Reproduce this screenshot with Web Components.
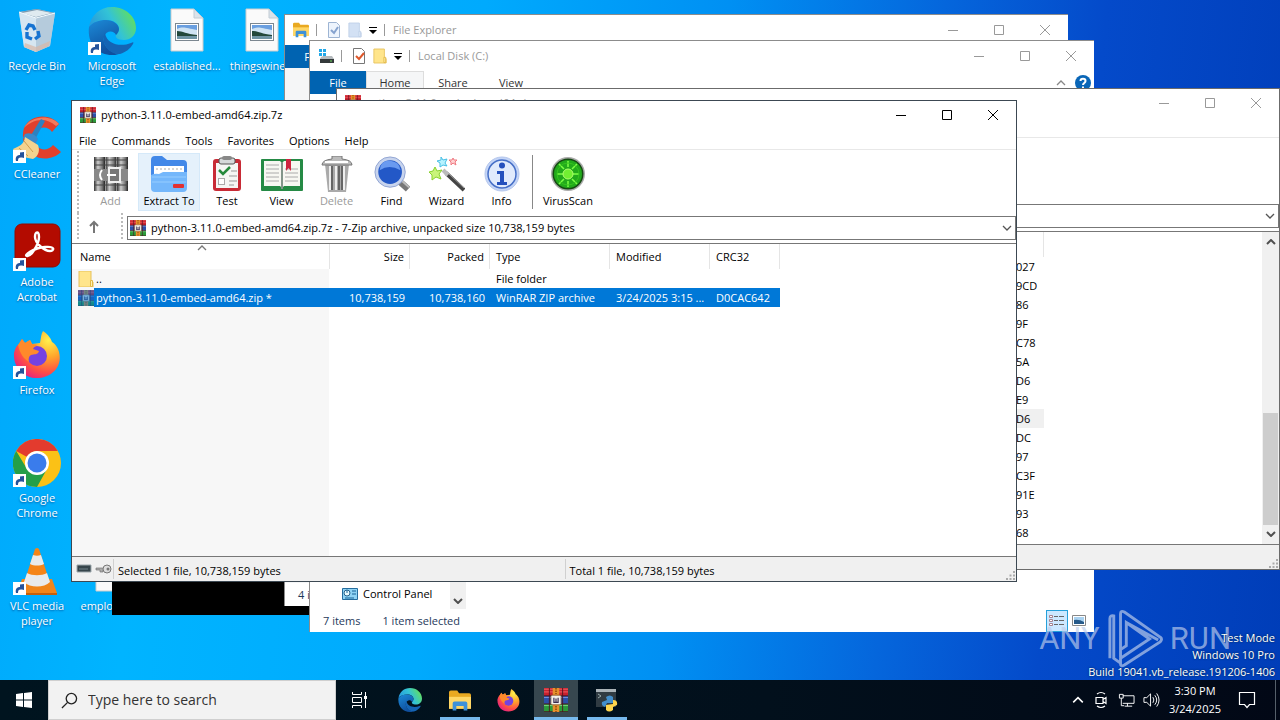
<!DOCTYPE html>
<html lang="en">
<head>
<meta charset="utf-8">
<title>Desktop</title>
<style>
  html, body { margin: 0; height: 100%; }
  body {
    --ui: "Open Sans", "Noto Sans", sans-serif;
    font: 11px/16px var(--ui);
    color: #000;
    overflow: hidden;
  }
</style>
</head>
<body>
<desktop-shell></desktop-shell>

<script>
const ICONS = {
  rar: ['0 0 16 16', `<rect width="16" height="5.3" fill="#c9202e"/><rect y="5.3" width="16" height="5.4" fill="#2c4fa8"/><rect y="10.7" width="16" height="5.3" fill="#2a9a3a"/>
    <path d="M0 .8h16M0 2.6h16" stroke="#f06a6a" stroke-width=".6"/><path d="M0 6.3h16" stroke="#7f9be6" stroke-width=".6"/><path d="M0 11.7h16" stroke="#7fd886" stroke-width=".6"/>
    <path d="M0 5.2h16M0 10.6h16M0 15.8h16M3.6 0v16M12.4 0v16" stroke="#4d1420" stroke-width=".6"/>
    <rect x="5.8" width="4.4" height="16" fill="#e8902c"/><path d="M8 0v4M8 12v4" stroke="#8a4508" stroke-dasharray="1 .7"/>
    <rect x="4.6" y="4.8" width="6.8" height="6.4" rx=".8" fill="#f3f0ea" stroke="#7c4b20" stroke-width=".5"/><path d="M6.600 9.600V6.500M8 9.600V7M9.400 9.600V6.500M6.200 9.600h3.600" fill="none" stroke="#3a2c50" stroke-width=".8"/>`],
  bin: ['0 0 48 48', `<path d="M6 5 24 2l18 4-5 33-14 6-12-5z" fill="#b9d6ea" opacity=".85"/><path d="M6 5 24 2l18 4-19 5z" fill="#7d9bb0"/><path d="M9 6l15-3 15 3-16 4z" fill="#dfeaf0"/><path d="M6 5 23 11v34l-12-5z" fill="#d6e6f1"/><path d="M23 11 42 6l-5 33-14 6z" fill="#b5cbdc"/><path d="M6 5 23 11 42 6" fill="none" stroke="#f5fbff"/><path d="M12 36l11 4 14-6-1 5-13 6-12-5z" fill="#d8b7a5" opacity=".7"/><path d="m13 23 3-5 4 1 2 4M25 24l1 5-4 3M19 32l-5-2v-5" fill="none" stroke="#1673d1" stroke-width="3.4"/>`],
  edge: ['0 0 48 48', `<defs><linearGradient id="a" x1="0" x2="1" y1=".6" y2=".2"><stop stop-color="#2597dc"/><stop offset=".5" stop-color="#33c3d6"/><stop offset="1" stop-color="#68e24f"/></linearGradient><linearGradient id="b" y2="1" x2=".4"><stop stop-color="#1c8bd8"/><stop offset="1" stop-color="#0f4f9e"/></linearGradient></defs>
    <path d="M1 20C3 8 12 0 24 0c14 0 24 10 24 21 0 8-6 12-12 12-7 0-9-3-8-5 2-2 3-4 3-6 0-5-5-9-12-9C11 13 4 16 1 20z" fill="url(#a)"/><path d="M1 20c4-5 10-7 17-7 7 0 13 4 13 9 0 2-1 4-3 6-2-5-10-5-12 2-2 8 6 16 15 17-3 1-5 1-7 1C9 48-1 36 1 20z" fill="url(#b)"/><path d="M17 26c-5 10 4 22 15 21 6-2 10-5 13-10 1-2 0-2-2-1-10 4-24 2-26-10z" fill="#1564b4"/>`],
  picture: ['0 0 48 48', `<path d="M8 2h23l9 9v33H8z" fill="#fafafa" stroke="#ccc"/><path d="M31 2v9h9z" fill="#dbe3ea" stroke="#c2ccd4"/><rect x="12.500" y="16.500" width="23" height="17" fill="#fff" stroke="#7c8790"/><rect x="14" y="18" width="20" height="14" fill="#6a9fe0"/><path d="M14 22c6-3 9-1 20 1v5H14z" fill="#cfe3f3"/><path d="M14 24c6 0 9 3 20 4v1H14z" fill="#23483b"/><path d="M14 29h20v3H14z" fill="#6f95a5"/>`],
  cc: ['0 0 48 48', `<path d="M46 9C38-1 18-2 11 13c-3 9 0 22 9 27 9 6 21 4 28-3l-8-7c-4 5-11 6-15 2-5-5-5-13-1-17 5-4 12-3 15 2z" fill="#e0402c"/><path d="M11 13C17 1 37-1 46 9l-3 2C32 1 19 5 11 13z" fill="#f37a5c"/><path d="m28 4 4 2-12 22-5-3z" fill="#2c81c0"/><path d="M12 19c5-2 10 0 13 5l-4 7-11-8z" fill="#3a8acb"/><path d="M12 22c-1 8-6 9-12 12 2 6 10 8 20 10 6-3 7-9 5-14z" fill="#f4d38f"/><path d="m6 33 9 8m-4-15 9 11" stroke="#d29d4e"/>`],
  adobe: ['0 0 48 48', `<rect x="2" y="1" width="45" height="43" rx="7" fill="#b30b00" stroke="#930900"/><path d="M14 33c-4 0 6-8 18-9 11-1 9 4 5 4-6 0-15-8-15-14 0-6 4-6 4 0 0 7-8 20-12 19z" fill="none" stroke="#fff" stroke-width="2.400"/>`],
  firefox: ['0 0 48 48', `<defs><radialGradient id="f" cx=".75" cy=".2" r=".9"><stop stop-color="#fff04d"/><stop offset=".4" stop-color="#ffa62b"/><stop offset=".75" stop-color="#ff4f45"/><stop offset="1" stop-color="#e5227f"/></radialGradient></defs><path d="M30 0c6 4 8 8 9 11 2 1 6 5 7 10 4 15-8 26-22 26S0 36 1 22c1-5 3-8 5-9l3-5 3 4 5-3 2 4 8-1c1-5 1-9 3-12z" fill="url(#f)"/><circle cx="24" cy="25" r="10" fill="#7542e0"/><path d="M5 14l4-6 3 4 5-3 2 4 8 1c-4 0-6 2-7 4l6 2c-1 4-5 3-8 4-2 1-3 4-2 7-5-3-9-8-11-17z" fill="#ff8a2b"/>`],
  chrome: ['0 0 48 48', `<circle cx="24" cy="24" r="24" fill="#fbc116"/><path d="M3.200 12A24 24 0 0 1 44.800 12H24a12 12 0 0 0-10 6z" fill="#e33b2e"/><path d="M3.200 12A24 24 0 0 0 24 48l10-18a12 12 0 0 1-20 0z" fill="#249f49"/><circle cx="24" cy="24" r="12" fill="#fff"/><circle cx="24" cy="24" r="9.500" fill="#3a7cec"/>`],
  vlc: ['0 0 48 48', `<path d="M9 32h30l5 14H4z" fill="#f0851a"/><path d="M4 46h40v2H4z" fill="#c65f0a"/><path d="M22 2q2-2 4 0l11 34c-6 5-20 5-26 0z" fill="#f58518"/><path d="m20 8-3 9c4 2 10 2 14 0l-3-9c-3 1-5 1-8 0zm-6 18-3 9c6 6 20 6 26 0l-3-9c-5 3-15 3-20 0z" fill="#e9ebec"/>`],
  shortcut: ['0 0 13 13', `<rect width="13" height="13" fill="#fff"/><path d="M3 11C2 7 4 5 7 5V2.500L11 2v6L9 7.500C6 7 5 8 5 11z" fill="#25539b"/>`],
  add: ['0 0 36 36', `<defs><linearGradient id="g"><stop stop-color="#333"/><stop offset=".35" stop-color="#ccc"/><stop offset=".75" stop-color="#777"/><stop offset="1" stop-color="#222"/></linearGradient></defs><rect x="1" y="1" width="11" height="34" fill="url(#g)"/><rect x="12.500" y="1" width="11" height="34" fill="url(#g)"/><rect x="24" y="1" width="11" height="34" fill="url(#g)"/><path d="M1 4h34M1 9h34M1 29h34" stroke="#444"/><rect x="1" y="13" width="34" height="12" fill="#888"/><rect x="16" y="12" width="11" height="14" fill="#777" stroke="#eee" stroke-width="2"/><path d="M14 19h9M9 14q-4 5 0 10" stroke="#fff" stroke-width="2" fill="none"/>`],
  extract: ['0 0 36 36', `<path d="M0 4q0-4 4-4h7l5 4h16q4 0 4 4v20H0z" fill="#4288e8"/><rect x="3" y="10" width="30" height="16" fill="#fff"/><path d="M5 13h27" stroke="#aaa" stroke-dasharray="2 2"/><path d="M0 19q4-2 8-1l4-2h24v16q0 4-4 4H4q-4 0-4-4z" fill="#74b7fb"/><path d="M1 21h34M1 26h34" stroke="#96cdff"/><rect x="22" y="28" width="11" height="4" rx="1" fill="#e33030"/>`],
  test: ['0 0 36 36', `<rect x="4" y="3" width="28" height="32" rx="3" fill="#c82b36"/><path d="M7 7h22v25H7z" fill="#f5f6f4"/><rect x="10" y="2" width="16" height="6" rx="2" fill="#d5d9da" stroke="#555"/><rect x="13" y="0" width="10" height="4" rx="2" fill="#888"/><path d="m10 14 4 4 7-7" fill="none" stroke="#258a3c" stroke-width="2.500"/><path d="M22 15h6M20 20h8M20 25h8M20 29h5" stroke="#999"/><rect x="9.500" y="22.500" width="6" height="6" fill="#fff" stroke="#aaa"/>`],
  view: ['0 0 44 36', `<rect x="1" y="3" width="42" height="32" rx="1" fill="#258a45"/><path d="M4 5h16l2 2 2-2h16v25H24l-2 2-2-2H4z" fill="#f7f7f2"/><path d="M22 6v27" stroke="#82958a" stroke-width="2"/><path d="M6 9h13M6 13h13M6 17h13M6 21h13M6 25h13M25 13h13M25 17h13M25 21h13M25 25h13" stroke="#aaa"/><path d="M26 3h5v12l-2.500-3-2.500 3z" fill="#ce2440"/>`],
  trash: ['0 0 36 36', `<path d="M6 8h24l-3 28H9z" fill="#aaa"/><path d="M11 10v24M17 10v24M25 10v24" stroke="#eee" stroke-width="2"/><path d="M13 10v24M20 10v24M23 10v24" stroke="#666" stroke-width="2"/><path d="M3 9q0-5 10-6V0h10v3q10 1 10 6z" fill="#bbb" stroke="#777"/><path d="M6 6h23" stroke="#fff" stroke-width="2"/>`],
  find: ['0 0 38 38', `<path d="m26 26 10 9" stroke="#777" stroke-width="7"/><path d="m27 24 10 9" stroke="#bbb" stroke-width="2"/><circle cx="17" cy="17" r="16" fill="#c8d4ed" stroke="#8ea2d1"/><circle cx="17" cy="17" r="12.500" fill="#2358c7"/><path d="M6 15q10-7 22 0Q27 6 17 5T6 15z" fill="#6a9af0"/>`],
  wizard: ['0 0 36 36', `<path d="m17 17 18 17" stroke="#444" stroke-width="4"/><path d="m14 14 5 5" stroke="#bbb" stroke-width="4"/><path d="m20 18 15 14" stroke="#999"/><path d="m6 11 2 4 5-1-3 4 2 5-5-2-4 3v-5l-3-3 4-1z" fill="#c9f47a" stroke="#88d12e"/><path d="m12 1 2 3 4-1-2 4 2 3-4-1-3 2V7L8 5l4-1z" fill="#b6f2ff" stroke="#48bfe5"/><path d="m24 2 1 2h3l-2 2 1 3-3-2-2 2V6l-2-2h3z" fill="#ffd1d1" stroke="#ef7b83"/>`],
  info: ['0 0 36 36', `<circle cx="18" cy="18" r="17" fill="#c4d5f7" stroke="#b4c6ec"/><circle cx="18" cy="18" r="14" fill="#e0eafc" stroke="#466fc7" stroke-width="1.500"/><circle cx="18" cy="9.500" r="3" fill="#2450bd"/><path d="M13 15h7v11h3v3H13v-3h3v-8h-3z" fill="#2450bd"/>`],
  virus: ['0 0 36 36', `<circle cx="18" cy="18" r="17" fill="#aaa"/><circle cx="18" cy="18" r="15.500" fill="#164b13"/><circle cx="18" cy="18" r="14" fill="#22aa1b"/><path d="m9 8 5 5m13-5-5 5M7 18h6m10 0h6M9 28l5-5m13 5-5-5M18 5v6m0 14v6" stroke="#7dff45" stroke-width="1.500"/><circle cx="18" cy="18" r="5" fill="#72ef32" stroke="#b1ff70"/><circle cx="18" cy="18" r="11" fill="none" stroke="#35c41e"/>`],
  up: ['0 0 12 14', `<path d="M6 13V2M2 6l4-4 4 4" fill="none" stroke="#777" stroke-width="2"/>`],
  folder: ['0 0 16 16', `<path d="M1 0h12v11h2v5H1z" fill="#ffe58b" stroke="#e6c15b"/><path d="M12.500 9.500h2v6h-2z" fill="#fff1b3" stroke="#e3b845"/>`],
  folderDim: ['0 0 16 16', `<path d="M1 0h12v11h2v5H1z" fill="#d3e1f4" stroke="#bfd0e8"/><path d="M12.500 9.500h2v6h-2z" fill="#e4edf9" stroke="#bfd0e8"/>`],
  page: ['0 0 14 16', `<path d="M1.500.5h8l3 3v12h-11z" fill="#fff" stroke="#777"/><path d="m4 8 3 3 5-6" fill="none" stroke="#de582b" stroke-width="2"/>`],
  pageDim: ['0 0 14 16', `<path d="M1.500.5h8l3 3v12h-11z" fill="#edf4fd" stroke="#9db4d3"/><path d="m4 8 3 3 4-6" fill="none" stroke="#86a3cf" stroke-width="2"/>`],
  explorer: ['0 0 24 22', `<path d="M0 2q0-2 2-2h7l2 3h11q2 0 2 2v15H0z" fill="#e9a921"/><path d="M0 7h24v13H0z" fill="#ffd766"/><path d="M4 22v-8q0-2 2-2h12q2 0 2 2v8h-4v-5H8v5z" fill="#3d91d8"/>`],
  drive: ['0 0 16 16', `<path d="M1 1h3v3H1zM5 1h3v3H5zM1 5h3v3H1zM5 5h3v3H5z" fill="#20a7e8"/><path d="m3 9 2-1h9l2 3H2z" fill="#b5babd"/><path d="M2 11h14v4H2z" fill="#34393b"/><path d="M12 13h2" stroke="#70e060"/>`],
  drop: ['0 0 8 7', `<path d="M0 .5h8" stroke="#000"/><path d="M0 3h8L4 7z"/>`],
  min: ['0 0 10 10', `<path d="M0 5.500h10" stroke="currentColor"/>`],
  max: ['0 0 10 10', `<path d="M.5.5h9v9h-9z" fill="none" stroke="currentColor"/>`],
  close: ['0 0 10 10', `<path d="m0 0 10 10M10 0 0 10" fill="none" stroke="currentColor"/>`],
  down: ['0 0 10 6', `<path d="m1 1 4 4 4-4" fill="none" stroke="currentColor" stroke-width="1.300"/>`],
  downBold: ['0 0 10 6', `<path d="m1 1 4 4 4-4" fill="none" stroke="#505050" stroke-width="2"/>`],
  upBold: ['0 0 10 6', `<path d="m1 5 4-4 4 4" fill="none" stroke="#505050" stroke-width="2"/>`],
  chevUp: ['0 0 10 6', `<path d="m1 5 4-4 4 4" fill="none" stroke="currentColor" stroke-width="1.300"/>`],
  help: ['0 0 16 16', `<circle cx="8" cy="8" r="8" fill="#0a66b7"/><path d="M5.500 6c0-3 5-3 5 0 0 2-2.500 2-2.500 4M8 11.500v2" fill="none" stroke="#fff" stroke-width="2"/>`],
  disk: ['0 0 16 10', `<path d="M1 1h14v7H1z" fill="#36454b" stroke="#9ca7ac"/><path d="M3 5h9" stroke="#71828a"/>`],
  key: ['0 0 17 10', `<path d="M1 4h9v2H8v2H5V6H1z" fill="#aaa" stroke="#777" stroke-width=".7"/><circle cx="12" cy="5" r="4" fill="#ddd" stroke="#777"/><circle cx="13" cy="5" r="1.500" fill="#777"/>`],
  grip: ['0 0 9 9', `<path d="M7 0h2v2H7zM7 3.500h2v2H7zM7 7h2v2H7zM3.500 3.500h2v2h-2zM3.500 7h2v2h-2zM0 7h2v2H0z" fill="#aaa"/>`],
  control: ['0 0 16 12', `<path d="M.5.5h15v11H.5z" fill="#8ed3f5" stroke="#246c9e"/><circle cx="5" cy="5" r="3" fill="#e9fbff" stroke="#28638b"/><path d="M5 5V2m5 1h4m-4 3h4M3 10h9" stroke="#176297"/>`],
  details: ['0 0 16 12', `<path d="M.5.5h3v2h-3zm0 4h3v2h-3zm0 4h3v2h-3z" fill="#fff" stroke="#a78390"/><path d="M5 1.500h4m1 0h5M5 5.500h4m1 0h5M5 9.500h4m1 0h5" stroke="#666"/>`],
  thumb: ['0 0 14 11', `<path d="M.5.5h13v10H.5z" fill="#fff" stroke="#888"/><path d="M2 2h10v7H2z" fill="#a9d2f1"/><path d="M2 5q5-1 10 2v2H2z" fill="#275a89"/>`],
  logo: ['0 0 58 60', `<path d="M3 50V9q0-4 4-3v44l7 5m0-6V4q0-4 4-2l37 26q3 2 0 5L18 57q-4 2-4-1v-6l30-20-24-17v24l-6 4M20 13l33 18" fill="none" stroke="currentColor" stroke-width="3"/>`],
  windows: ['0 0 16 16', `<path d="m0 2 7-1v6.500H0zm8-1 8-1v7.500H8zM0 8.500h7V15l-7-1zm8 0h8V16l-8-1z" fill="#fff"/>`],
  search: ['0 0 18 18', `<circle cx="11" cy="7" r="5.500" fill="none" stroke="#222" stroke-width="1.400"/><path d="m7 11-6 6" stroke="#222" stroke-width="1.400"/>`],
  tasks: ['0 0 18 16', `<path d="M1.500 0v2.500h9V0M1.500 16v-2.500h9V16M1.500 5.500h9v5h-9zM14.500 0v16" fill="none" stroke="#fff"/><path d="M13 4h3v3h-3z" fill="#fff"/>`],
  python: ['0 0 24 24', `<path d="M1 1h20v18H1z" fill="#303b42"/><path d="M1 1h20v3H1z" fill="#aab3b8"/><path d="m3 6 3 2-3 2" stroke="#9aa" fill="none"/><path d="M11 9q4-3 7 0v6h-6l-2 4q-4-1-3-5l5-2z" fill="#438fcc"/><path d="M18 12q5 0 4 5l-4 2v3q-4 3-7 0v-5l7-1z" fill="#ffd64d"/>`],
  meet: ['0 0 14 18', `<path d="M2 6.500h7v6H2zm7 2 3-2v6l-3-2M3 3q4-3 8 0M3 15q4 3 8 0" fill="none" stroke="#fff" stroke-width="1.200"/>`],
  net: ['0 0 18 15', `<path d="M5 2.500h12v8H5m5 0v3m-3 0h8M1.500 1v4h4V1zM3.500 5v8h3" fill="none" stroke="#fff"/>`],
  sound: ['0 0 18 16', `<path d="M1 5.500h3l4-4v13l-4-4H1zM10.500 5q2 3 0 6m2-8q4 5 0 10m2-12q5 7 0 14" fill="none" stroke="#fff"/>`],
  note: ['0 0 18 18', `<path d="M1.500 1.500h15v12h-5l-2.500 3-2.500-3h-5z" fill="none" stroke="#fff" stroke-width="1.200"/>`]
};
ICONS.rarSelected = ['0 0 16 16', ICONS.rar[1] + '<rect width="16" height="16" fill="#0078d7" opacity=".5"/>'];

const define = (name, html) => {
  customElements.define(name, class extends HTMLElement {
    connectedCallback() {
      if (this.shadowRoot) return;
      const tpl = document.createElement('template');
      tpl.innerHTML = typeof html === 'function' ? html(this) : html;
      this.attachShadow({ mode: 'open' }).append(tpl.content.cloneNode(true));
    }
  });
};

define('ui-icon', el => {
  const [box, art] = ICONS[el.getAttribute('name')];
  const w = el.getAttribute('w'), h = el.getAttribute('h') || w;
  return `<style>:host{display:block;flex:none;width:${w}px;height:${h}px}svg{display:block}</style><svg width="${w}" height="${h}" viewBox="${box}" aria-hidden="true">${art}</svg>`;
});

define('desk-icon', el => `<style>
  :host{display:block;min-width:0}
  button{all:unset;box-sizing:border-box;position:relative;width:100%;display:flex;flex-direction:column;align-items:center;gap:3px;padding:7px 1px 0 0;color:#fff;font:11px/15px var(--ui);text-align:center;text-shadow:0 1px 2px #0058a0}
  .arrow{position:absolute;left:13px;top:42px}
  span{max-width:100%;white-space:pre-line}
  </style><button><ui-icon name="${el.getAttribute('icon')}" w="48"></ui-icon>${el.hasAttribute('shortcut') ? '<ui-icon class="arrow" name="shortcut" w="13"></ui-icon>' : ''}<span><slot></slot></span></button>`);

define('caption-bar', `<style>
  :host{display:flex;align-items:stretch;height:30px;flex:none;color:#999;background:#fff}
  .t{display:flex;align-items:center;flex:1;padding-left:8px;min-width:0;white-space:nowrap}
  button{all:unset;width:46px;display:flex;align-items:center;justify-content:center}
  </style><div class="t"><slot></slot></div>
  <button aria-label="Minimize"><ui-icon name="min" w="10"></ui-icon></button><button aria-label="Maximize"><ui-icon name="max" w="10"></ui-icon></button><button aria-label="Close"><ui-icon name="close" w="10"></ui-icon></button>`);

define('explorer-window', el => {
  const main = el.hasAttribute('drive');
  return `<style>
  :host{display:flex;flex-direction:column;box-sizing:border-box;background:#fff;border:1px solid #8c8c8c;border-width:1px 0 0 1px}
  .q{display:flex;align-items:center;gap:7px;padding-right:8px}
  .bar{width:1px;height:12px;background:#999}
  .first{margin-right:3px}
  .tabs{display:flex;height:23px;flex:none;color:#333}
  .tabs button{all:unset;box-sizing:border-box;width:58px;text-align:center;line-height:24px}
  .tabs .file{width:56px;background:#0063b1;color:#fff}
  .tabs .on{background:#f5f6f7;border:1px solid #ddd;border-bottom:0;line-height:22px}
  .help{margin-left:auto;display:flex;align-items:center;gap:9px;padding-right:3px;color:#888}
  .body{flex:1;display:flex;align-items:flex-end;background:${main ? '#fff' : '#f5f6f7'}}
  .nav{display:flex;align-items:center;gap:5px;width:108px;padding:0 0 7px 32px}
  .sb{width:16px;height:60px;background:#f0f0f0;display:flex;align-items:flex-end;justify-content:center;padding-bottom:5px;box-sizing:border-box}
  footer{flex:none;height:23px;display:flex;align-items:center;gap:22px;padding-left:13px;color:#1e395b;background:#fff}
  .views{margin-left:auto;display:flex;align-items:center;gap:4px;padding-right:8px}
  .views button{all:unset;display:flex;align-items:center;justify-content:center}
  .views .sel{box-sizing:border-box;width:22px;height:22px;background:#cce8ff;border:1px solid #26a0da}
  </style>
  <caption-bar><div class="q"><ui-icon name="${main ? 'drive' : 'explorer'}" w="16"></ui-icon><div class="bar first"></div><ui-icon name="${main ? 'page' : 'pageDim'}" w="14" h="16"></ui-icon><ui-icon name="${main ? 'folder' : 'folderDim'}" w="14" h="16"></ui-icon><ui-icon name="drop" w="8" h="7"></ui-icon><div class="bar"></div></div><span>${el.getAttribute('label')}</span></caption-bar>
  <div class="tabs"><button class="file">File</button>${main ? '<button class="on">Home</button><button>Share</button><button>View</button><div class="help"><ui-icon name="chevUp" w="10" h="6"></ui-icon><ui-icon name="help" w="16"></ui-icon></div>' : ''}</div>
  <div class="body">${main ? '<div class="nav"><ui-icon name="control" w="16" h="12"></ui-icon>Control Panel</div><div class="sb"><ui-icon name="downBold" w="10" h="6"></ui-icon></div>' : ''}</div>
  <footer><slot></slot>${main ? '<div class="views"><button class="sel" aria-label="Details"><ui-icon name="details" w="16" h="12"></ui-icon></button><button aria-label="Large icons"><ui-icon name="thumb" w="14" h="11"></ui-icon></button></div>' : ''}</footer>`;
});

define('rar-window', el => {
  const t = el.getAttribute('label');
  return `<style>
  :host{display:flex;flex-direction:column;box-sizing:border-box;background:#fff;border:1px solid #6b6b6b}
  :host([active]){border-color:#3c4852}
  caption-bar{height:28px}
  caption-bar span{padding-left:5px}
  :host([active]) caption-bar{color:#000}
  nav{display:flex;gap:15px;height:20px;flex:none;padding-left:7px;line-height:24px;border-bottom:1px solid #e8e8e8}
  .rebar{display:flex;flex-direction:column;flex:none;padding:1px 0 2px 5px}
  .grip{width:2px;flex:none;background:repeating-linear-gradient(#bbb 0 2px,#fff 2px 4px)}
  .tools{display:flex;height:62px}
  .tools slot{display:flex;padding:2px 0 0 4px}
  .addr{display:flex;height:28px}
  .up{all:unset;width:30px;height:28px;display:flex;align-items:center;justify-content:center;margin-right:12px}
  .combo{margin:3px 0 0 4px;flex:1;display:flex;align-items:center;border:1px solid #777;box-sizing:border-box;height:24px;padding:0 3px 0 2px;color:#555}
  select{all:unset;flex:1;padding-left:5px;color:#000;font:11px/20px var(--ui)}
  main{flex:1;display:flex;min-height:0;border:1px solid #777;border-width:1px 0;background:linear-gradient(90deg,var(--name-bg,#fff) 257px,#fff 257px)}
  .list{flex:1}
  .sb{width:17px;background:#f0f0f0;display:flex;flex-direction:column;align-items:center;box-sizing:border-box;padding:7px 0}
  .thumb{width:15px;height:112px;margin:auto 0 6px;background:#cdcdcd}
  footer{position:relative;flex:none;height:24px;display:flex;align-items:center;background:#f0f0f0;padding-left:4px}
  footer .i{display:flex;align-items:center;gap:3px;width:37px;height:20px;border-right:1px solid #d0d0d0}
  footer .s{display:flex;flex:1 1 0;padding-left:4px;height:20px;line-height:24px}
  .s+.s{border-left:1px solid #d0d0d0}
  footer ui-icon[name=grip]{position:absolute;right:1px;bottom:1px}
  </style>
  <caption-bar><ui-icon name="rar" w="16"></ui-icon><span>${t}</span></caption-bar>
  <nav><slot name="menu"></slot></nav>
  <div class="rebar"><div class="tools"><div class="grip"></div><slot name="tool"></slot></div>
  <div class="addr"><div class="grip"></div><button class="up" aria-label="Up"><ui-icon name="up" w="12" h="14"></ui-icon></button><div class="grip"></div>
  <div class="combo">${el.hasAttribute('path') ? `<ui-icon name="rar" w="16"></ui-icon><select aria-label="Path"><option>${el.getAttribute('path')}</option></select>` : '<select aria-label="Path"></select>'}<ui-icon name="down" w="10" h="6"></ui-icon></div></div></div>
  <main><div class="list"><slot></slot></div>${el.hasAttribute('scroll') ? '<div class="sb"><ui-icon name="upBold" w="10" h="6"></ui-icon><div class="thumb"></div><ui-icon name="downBold" w="10" h="6"></ui-icon></div>' : ''}</main>
  <footer><div class="i"><ui-icon name="disk" w="16" h="10"></ui-icon><ui-icon name="key" w="17" h="10"></ui-icon></div><div class="s"><slot name="left"></slot></div><div class="s"><slot name="right"></slot></div><ui-icon name="grip" w="9"></ui-icon></footer>`;
});

define('tool-button', el => `<style>
  :host{display:block}
  button{all:unset;box-sizing:border-box;width:${el.getAttribute('w') || 55}px;height:58px;padding-top:2px;display:flex;flex-direction:column;align-items:center;border:1px solid transparent;line-height:18px;white-space:nowrap}
  :host([on]) button{background:#e5f1fb;border-color:#d5e9f9}
  :host([off]) button{color:#9a9a9a}
  </style><button ${el.hasAttribute('off') ? 'disabled' : ''}><ui-icon name="${el.getAttribute('icon')}" w="${el.getAttribute('iw') || 36}" h="36"></ui-icon><slot></slot></button>`);

define('file-table', `<style>
  :host{display:block}
  table{border-collapse:separate;border-spacing:0;table-layout:fixed;width:708px}
  th,td{font-weight:400;text-align:left;padding:0 0 0 6px;height:19px;line-height:19px;box-sizing:border-box;white-space:nowrap;overflow:hidden}
  th{height:25px;border-right:1px solid #e5e5e5;background:#fff}
  th:first-child{padding-left:8px;position:relative}
  th ui-icon{position:absolute;left:125px;top:1px;color:#777}
  .n{text-align:right;padding:0 5px 0 0}
  td:first-child{padding-left:6px}
  .f{display:flex;align-items:center}
  .f span{flex:1;padding-left:2px}
  .sel td{background:#0078d7;color:#fff}
  .sel td:first-child{background:linear-gradient(90deg,#f7f7f7 22px,#0078d7 22px)}
  </style><table><colgroup><col style="width:258px"><col style="width:80px"><col style="width:80px"><col style="width:120px"><col style="width:100px"><col style="width:70px"></colgroup>
  <thead><tr><th>Name<ui-icon name="chevUp" w="10" h="6"></ui-icon></th><th class="n">Size</th><th class="n">Packed</th><th>Type</th><th>Modified</th><th>CRC32</th></tr></thead>
  <tbody><tr><td><div class="f"><ui-icon name="folder" w="16"></ui-icon><span>..</span></div></td><td></td><td></td><td>File folder</td><td></td><td></td></tr>
  <tr class="sel"><td><div class="f"><ui-icon name="rarSelected" w="16"></ui-icon><span>python-3.11.0-embed-amd64.zip *</span></div></td><td class="n">10,738,159</td><td class="n">10,738,160</td><td>WinRAR ZIP archive</td><td>3/24/2025 3:15 ...</td><td>D0CAC642</td></tr></tbody></table>`);

define('crc-table', `<style>
  :host{display:block}
  table{border-collapse:separate;border-spacing:0;table-layout:fixed;width:707px}
  td,th{padding:0 0 0 679px;height:19px;line-height:19px;font-weight:400;text-align:left}
  th{height:25px;border-right:1px solid #e5e5e5;box-sizing:border-box}
  .hot{background:#f0f0f0}
  </style><table><thead><tr><th></th></tr></thead><tbody>${['027','9CD','86','9F','C78','5A','D6','E9','D6','DC','97','C3F','91E','93','68'].map((v, i) => `<tr${i === 8 ? ' class="hot"' : ''}><td>${v}</td></tr>`).join('')}</tbody></table>`);

define('brand-mark', `<style>
  :host{display:flex;align-items:center;gap:7px;color:rgba(190,205,235,.68);font:31px/60px "Liberation Sans Narrow","Roboto",sans-serif}
  </style><span>ANY</span><ui-icon name="logo" w="56" h="60"></ui-icon><span>RUN</span>`);

define('task-bar', `<style>
  :host{display:flex;height:40px;flex:none;background:linear-gradient(90deg,#00141f,#02101c 60%,#020816);color:#fff}
  button{all:unset;box-sizing:border-box;display:flex;align-items:center;justify-content:center;height:40px;width:48px}
  .search{display:flex;align-items:center;gap:10px;width:288px;box-sizing:border-box;padding:0 12px;background:#f2f2f2;border:1px solid #cfcfcf}
  input{all:unset;flex:1;min-width:0;font:14px/20px var(--ui);color:#333}
  input::placeholder{color:#333;opacity:1}
  .app{width:49px}
  .edge{width:51px}
  .run{width:40px;border-bottom:3px solid #76b9ed;padding-top:3px;margin:0 4px 0 5px}
  .act{width:44px;margin-left:1px;background:#37474f}
  .tray{margin-left:auto;display:flex;align-items:center;gap:8px}
  .tray button{width:auto}
  time{line-height:18px;text-align:center;width:54px}
  .tray .note{width:50px;margin-left:-8px}
  .tray .peek{width:5px;margin-left:-5px;border-left:1px solid #56606a}
  </style>
  <button aria-label="Start"><ui-icon name="windows" w="16"></ui-icon></button>
  <label class="search"><ui-icon name="search" w="17"></ui-icon><input placeholder="Type here to search" aria-label="Search"></label>
  <button aria-label="Task view"><ui-icon name="tasks" w="18" h="16"></ui-icon></button>
  <button class="edge" aria-label="Edge"><ui-icon name="edge" w="24"></ui-icon></button>
  <button class="run" aria-label="File Explorer"><ui-icon name="explorer" w="22" h="21"></ui-icon></button>
  <button class="app" aria-label="Firefox"><ui-icon name="firefox" w="23"></ui-icon></button>
  <button class="run act" aria-label="WinRAR"><ui-icon name="rar" w="24"></ui-icon></button>
  <button class="run" aria-label="Python"><ui-icon name="python" w="24"></ui-icon></button>
  <div class="tray"><button aria-label="Hidden icons"><ui-icon name="chevUp" w="12" h="8"></ui-icon></button><button aria-label="Meet"><ui-icon name="meet" w="18" h="18"></ui-icon></button><button aria-label="Network"><ui-icon name="net" w="17" h="15"></ui-icon></button><button aria-label="Volume"><ui-icon name="sound" w="17" h="16"></ui-icon></button><time>3:30 PM<br>3/24/2025</time><button class="note" aria-label="Notifications"><ui-icon name="note" w="18"></ui-icon></button><button class="peek" aria-label="Show desktop"></button></div>`);

define('desktop-shell', `<style>
  :host{display:flex;flex-direction:column;height:100vh}
  .desk{position:relative;flex:1;overflow:hidden;background:linear-gradient(96deg,#00a8fb,#00b4ff 14%,#00aafd 36%,#0090f3 54%,#0566dc 70%,#044aca 82%,#003db8)}
  .icons{display:grid;grid-template-columns:repeat(4,75px);grid-auto-rows:108px}
  .icons .c1{grid-column:1}
  .win{position:absolute}
  .black{background:#000}
  .info{position:absolute;right:5px;bottom:0;color:#fff;text-align:right;line-height:17px;text-shadow:0 0 2px #023}
  .mark{position:absolute;right:49px;bottom:11px}
  .sep{width:1px;height:54px;margin:2px 3px;background:#888}
  </style>
  <div class="desk">
    <div class="icons">
      <desk-icon icon="bin">Recycle Bin</desk-icon><desk-icon icon="edge" shortcut>Microsoft
Edge</desk-icon><desk-icon icon="picture">established...</desk-icon><desk-icon icon="picture">thingswine...</desk-icon>
      <desk-icon class="c1" icon="cc" shortcut>CCleaner</desk-icon>
      <desk-icon class="c1" icon="adobe" shortcut>Adobe
Acrobat</desk-icon>
      <desk-icon class="c1" icon="firefox" shortcut>Firefox</desk-icon>
      <desk-icon class="c1" icon="chrome" shortcut>Google
Chrome</desk-icon>
      <desk-icon class="c1" icon="vlc" shortcut>VLC media
player</desk-icon><desk-icon icon="picture">employme...</desk-icon>
    </div>
    <div class="win black" style="left:112px;top:140px;width:420px;height:475px"></div>
    <explorer-window class="win" label="File Explorer" style="left:284px;top:14px;width:784px;height:592px"><span>4 items</span></explorer-window>
    <explorer-window class="win" drive label="Local Disk (C:)" style="left:309px;top:40px;width:785px;height:592px"><span>7 items</span><span>1 item selected</span></explorer-window>
    <rar-window class="win" scroll label="python-3.11.0-embed-amd64.zip" style="left:336px;top:88px;width:944px;height:482px"><crc-table></crc-table></rar-window>
    <rar-window class="win" active label="python-3.11.0-embed-amd64.zip.7z" path="python-3.11.0-embed-amd64.zip.7z - 7-Zip archive, unpacked size 10,738,159 bytes" style="left:71px;top:100px;width:946px;height:482px;--name-bg:#f7f7f7">
      <span slot="menu">File</span><span slot="menu">Commands</span><span slot="menu">Tools</span><span slot="menu">Favorites</span><span slot="menu">Options</span><span slot="menu">Help</span>
      <tool-button slot="tool" icon="add" off>Add</tool-button><tool-button slot="tool" icon="extract" w="62" on>Extract To</tool-button><tool-button slot="tool" icon="test" w="54">Test</tool-button><tool-button slot="tool" icon="view" iw="44">View</tool-button><tool-button slot="tool" icon="trash" off>Delete</tool-button><tool-button slot="tool" icon="find">Find</tool-button><tool-button slot="tool" icon="wizard">Wizard</tool-button><tool-button slot="tool" icon="info">Info</tool-button><div slot="tool" class="sep"></div><tool-button slot="tool" icon="virus" w="64">VirusScan</tool-button>
      <file-table></file-table>
      <span slot="left">Selected 1 file, 10,738,159 bytes</span><span slot="right">Total 1 file, 10,738,159 bytes</span>
    </rar-window>
    <brand-mark class="mark"></brand-mark>
    <div class="info">Test Mode<br>Windows 10 Pro<br>Build 19041.vb_release.191206-1406</div>
  </div>
  <task-bar></task-bar>`);
</script>
</body>
</html>
